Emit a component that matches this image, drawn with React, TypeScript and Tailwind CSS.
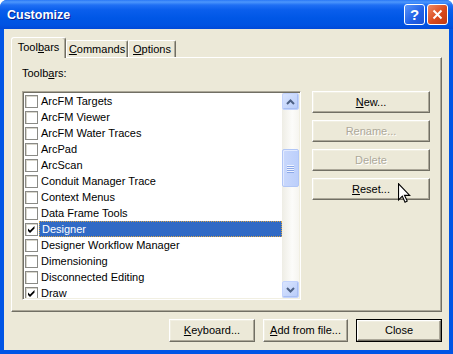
import clsx from "clsx";
import type { ReactNode } from "react";

const items = [
  { name: "ArcFM Targets" },
  { name: "ArcFM Viewer" },
  { name: "ArcFM Water Traces" },
  { name: "ArcPad" },
  { name: "ArcScan" },
  { name: "Conduit Manager Trace" },
  { name: "Context Menus" },
  { name: "Data Frame Tools" },
  { name: "Designer", checked: true, selected: true },
  { name: "Designer Workflow Manager" },
  { name: "Dimensioning" },
  { name: "Disconnected Editing" },
  { name: "Draw", checked: true },
];

function Btn({
  children,
  disabled,
  isDefault,
  className,
}: {
  children: ReactNode;
  disabled?: boolean;
  isDefault?: boolean;
  className?: string;
}) {
  const face = (
    <div
      className={clsx(
        "flex h-full w-full items-center justify-center border border-t-white border-l-white border-r-[#716F64] border-b-[#716F64] bg-[#ECE9D8] shadow-[inset_-1px_-1px_0_#ACA899,inset_1px_1px_0_#F1EFE2]",
        disabled && "text-[#ACA899] [text-shadow:1px_1px_0_#FFFFFF]"
      )}
    >
      {children}
    </div>
  );
  if (isDefault) {
    return <div className={clsx("border border-black", className)}>{face}</div>;
  }
  return <div className={className}>{face}</div>;
}

function Check({ checked }: { checked?: boolean }) {
  return (
    <div className="flex h-[13px] w-[13px] shrink-0 items-center justify-center border border-[#8A8A86] bg-white shadow-[inset_1px_1px_0_#D8D6CC]">
      {checked && (
        <svg width="9" height="9" viewBox="0 0 9 9">
          <path d="M1 3.5 L3 5.5 L7.5 1 L7.5 3.5 L3 8 L1 6 Z" fill="#000" />
        </svg>
      )}
    </div>
  );
}

function ScrollArrow({ up }: { up?: boolean }) {
  return (
    <div className="flex h-[17px] w-[17px] items-center justify-center rounded-[2px] border border-[#C3D3FD] bg-[linear-gradient(135deg,#D9E4FE,#B8CCF9)] shadow-[inset_-1px_-1px_0_#A9BFF2]">
      <svg width="9" height="6" viewBox="0 0 9 6">
        {up ? (
          <path d="M1 5 L4.5 1.5 L8 5" stroke="#4D6185" strokeWidth="2" fill="none" />
        ) : (
          <path d="M1 1 L4.5 4.5 L8 1" stroke="#4D6185" strokeWidth="2" fill="none" />
        )}
      </svg>
    </div>
  );
}

export default function App() {
  return (
    <div className="relative h-[354px] w-[453px] bg-white font-['Liberation_Sans',Arial,sans-serif] text-[11px] leading-[13px] text-black">
      <div className="flex h-full flex-col overflow-hidden rounded-t-[7px] bg-[#0055E5]">
        {/* title bar */}
        <div className="flex h-[29px] shrink-0 items-center bg-[linear-gradient(180deg,#2A78F6_0px,#4D97FC_2px,#2070F4_5px,#0A5EEC_10px,#0057E6_18px,#0053E2_25px,#0149D8_29px)] pl-[7px] pr-[5px]">
          <span className="flex-1 pt-[1px] text-[12.5px] font-bold text-white [text-shadow:1px_1px_0_#0A1E8C]">
            Customize
          </span>
          <div className="flex gap-[2px]">
            <div className="flex h-[21px] w-[21px] items-center justify-center rounded-[3px] border border-white bg-[linear-gradient(135deg,#5B95F9,#1F5FE6_60%,#1A52D4)] text-[15px] font-bold text-white">
              ?
            </div>
            <div className="flex h-[21px] w-[21px] items-center justify-center rounded-[3px] border border-white bg-[linear-gradient(135deg,#F08A64,#DA4A1E_55%,#C13A12)]">
              <svg width="11" height="11" viewBox="0 0 11 11">
                <path d="M1.5 1.5 L9.5 9.5 M9.5 1.5 L1.5 9.5" stroke="#fff" strokeWidth="2" />
              </svg>
            </div>
          </div>
        </div>

        {/* body */}
        <div className="mx-[4px] mb-[4px] flex flex-1 flex-col bg-[#ECE9D8] px-[7px] pt-[8px]">
          {/* tabs */}
          <div className="relative z-10 -mb-[1px] flex h-[21px] items-end">
            <div className="flex h-[21px] w-[55px] items-start justify-center rounded-t-[3px] border-t border-l border-t-white border-l-white border-r border-r-[#716F64] bg-[#ECE9D8] pt-[3px] shadow-[inset_-1px_0_0_#ACA899]">
              <span>
                Tool<span className="underline">b</span>ars
              </span>
            </div>
            <div className="mb-[1px] flex h-[17px] w-[62px] items-start justify-center rounded-t-[2px] border-t border-l border-t-white border-l-white border-r border-r-[#716F64] pt-[2px] shadow-[inset_-1px_0_0_#ACA899]">
              <span>
                <span className="underline">C</span>ommands
              </span>
            </div>
            <div className="mb-[1px] flex h-[17px] w-[48px] items-start justify-center rounded-t-[2px] border-t border-l border-t-white border-l-white border-r border-r-[#716F64] pt-[2px] shadow-[inset_-1px_0_0_#ACA899]">
              <span>
                <span className="underline">O</span>ptions
              </span>
            </div>
          </div>

          {/* panel */}
          <div className="flex h-[255px] flex-col border border-t-white border-l-white border-r-[#716F64] border-b-[#716F64] pl-[10px] pt-[9px] shadow-[inset_-1px_-1px_0_#ACA899]">
            <div>
              Toolb<span className="underline">a</span>rs:
            </div>
            <div className="mt-[11px] flex gap-[11px]">
              {/* list */}
              <div className="flex h-[209px] w-[279px] border border-t-[#ACA899] border-l-[#ACA899] border-r-white border-b-white bg-white shadow-[inset_1px_1px_0_#716F64,inset_-1px_-1px_0_#F1EFE2] p-[1px]">
                <div className="flex-1 overflow-hidden">
                  {items.map((it) => (
                    <div key={it.name} className="flex h-[16px] items-center pl-[1px]">
                      <Check checked={it.checked} />
                      <div
                        className={clsx(
                          "ml-[1px] flex h-[16px] flex-1 items-center pl-[2px]",
                          it.selected
                            ? "border border-dotted border-[#D6A44A] bg-[#316AC5] pl-[1px] text-white"
                            : ""
                        )}
                      >
                        {it.name}
                      </div>
                    </div>
                  ))}
                </div>
                {/* scrollbar */}
                <div className="flex w-[17px] flex-col bg-[linear-gradient(90deg,#EEEDE5,#FCFCFA_60%,#F6F5F0)]">
                  <ScrollArrow up />
                  <div className="h-[39px]" />
                  <div className="flex h-[38px] items-center justify-center rounded-[2px] border border-[#B1C6F6] bg-[linear-gradient(90deg,#C9D8FC,#BCCFFB)] shadow-[inset_1px_1px_0_#E2EAFE]">
                    <div className="flex flex-col gap-[1px]">
                      <div className="h-[1px] w-[7px] bg-[#EEF3FF] shadow-[0_1px_0_#8CA8E8]" />
                      <div className="h-[1px] w-[7px] bg-[#EEF3FF] shadow-[0_1px_0_#8CA8E8]" />
                      <div className="h-[1px] w-[7px] bg-[#EEF3FF] shadow-[0_1px_0_#8CA8E8]" />
                      <div className="h-[1px] w-[7px] bg-[#EEF3FF] shadow-[0_1px_0_#8CA8E8]" />
                    </div>
                  </div>
                  <div className="flex-1" />
                  <ScrollArrow />
                </div>
              </div>

              {/* side buttons */}
              <div className="flex w-[118px] flex-col gap-[7px]">
                <Btn className="h-[22px]">
                  <span>
                    <span className="underline">N</span>ew...
                  </span>
                </Btn>
                <Btn className="h-[22px]" disabled>
                  Rename...
                </Btn>
                <Btn className="h-[22px]" disabled>
                  Delete
                </Btn>
                <Btn className="h-[22px]">
                  <span>
                    <span className="underline">R</span>eset...
                  </span>
                </Btn>
              </div>
            </div>
          </div>

          {/* bottom buttons */}
          <div className="mt-[7px] flex justify-end gap-[8px]">
            <Btn className="h-[23px] w-[86px]">
              <span>
                <span className="underline">K</span>eyboard...
              </span>
            </Btn>
            <Btn className="h-[23px] w-[85px]">
              <span>
                <span className="underline">A</span>dd from file...
              </span>
            </Btn>
            <Btn className="h-[23px] w-[86px]" isDefault>
              Close
            </Btn>
          </div>
        </div>
      </div>

      {/* mouse cursor */}
      <svg className="absolute left-[398px] top-[183px]" width="13" height="21" viewBox="0 0 12 19">
        <path
          d="M0.5 0.5 L0.5 15.5 L4 12 L6.5 17.5 L8.5 16.5 L6 11.2 L10.8 11.2 Z"
          fill="#fff"
          stroke="#000"
          strokeWidth="1"
          strokeLinejoin="miter"
        />
      </svg>
    </div>
  );
}
